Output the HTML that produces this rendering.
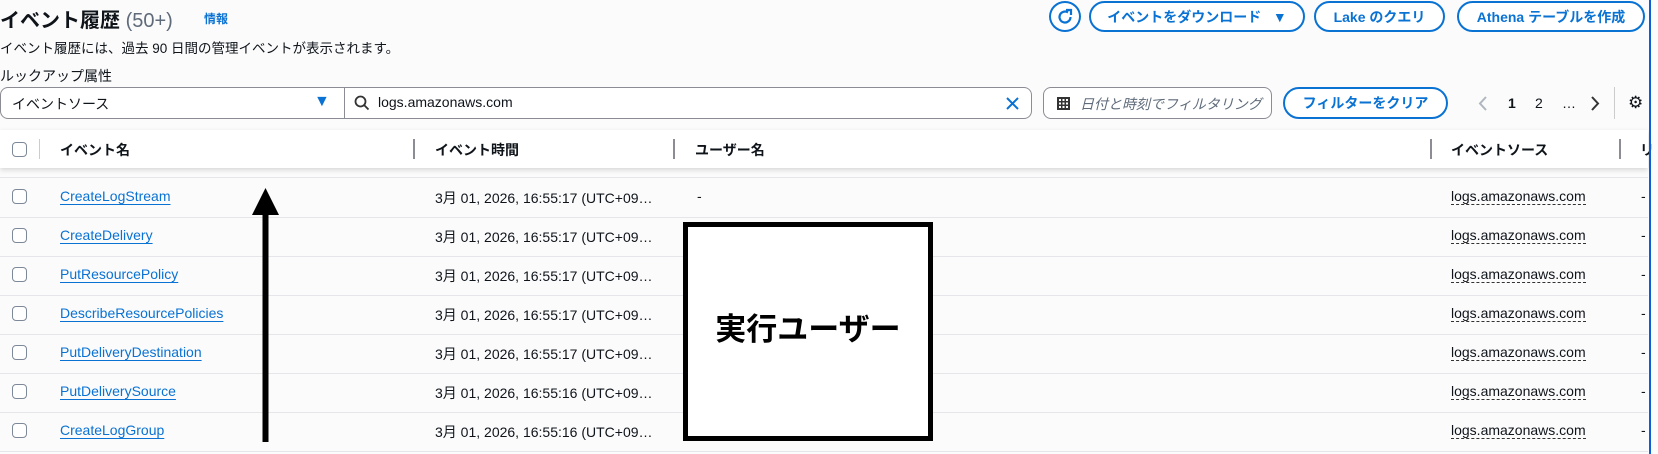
<!DOCTYPE html>
<html><head><meta charset="utf-8"><style>
*{box-sizing:border-box;margin:0;padding:0}
body{width:1658px;height:454px;overflow:hidden;background:#fbfbfb;font-family:"Liberation Sans","Noto Sans CJK JP",sans-serif;color:#0f141a;position:relative;font-size:14px}
.a{position:absolute;white-space:nowrap}
.btn{position:absolute;border:2px solid #0972d3;border-radius:20px;color:#0972d3;font-weight:bold;font-size:14px;display:flex;align-items:center;justify-content:center;background:#fff}
.cb{position:absolute;width:15px;height:15px;border:1.5px solid #7d8998;border-radius:4px;background:#fff}
.dv{position:absolute;width:2px;height:20px;background:#8c8c94}
.lk{color:#0972d3;text-decoration:underline;text-underline-offset:3px}
.src{border-bottom:1.5px dashed #333}
.ln{position:absolute;left:0;width:1648px;height:1px;background:#e6e6ea}
</style></head><body>
<div class="a" style="left:0;top:4px;font-size:20px;font-weight:bold">イベント履歴 <span style="font-weight:normal;color:#5f6b7a">(50+)</span></div>
<div class="a" style="left:204px;top:10px;font-size:12px;font-weight:bold;color:#0972d3">情報</div>
<div class="a" style="left:0;top:37px;font-size:13.5px">イベント履歴には、過去 90 日間の管理イベントが表示されます。</div>
<div class="a" style="left:0;top:66px;font-size:14px">ルックアップ属性</div>

<div class="btn" style="left:1049px;top:1px;width:32px;height:31px;border-radius:50%"><svg width="18" height="18" viewBox="0 0 18 18"><path d="M14.5 9A5.5 5.5 0 1 1 12 4.4" fill="none" stroke="#0972d3" stroke-width="2.2"/><path d="M10 2h5v5" fill="none" stroke="#0972d3" stroke-width="2.2"/></svg></div>
<div class="btn" style="left:1089px;top:1px;width:216px;height:31px">イベントをダウンロード&nbsp;&nbsp;&nbsp;▼</div>
<div class="btn" style="left:1314px;top:1px;width:131px;height:31px">Lake のクエリ</div>
<div class="btn" style="left:1457px;top:1px;width:188px;height:31px">Athena テーブルを作成</div>

<div class="a" style="left:0;top:87px;width:345px;height:32px;border:1px solid #8c8c94;border-radius:8px 0 0 8px;background:#fff"></div>
<div class="a" style="left:12px;top:94px;font-size:14px">イベントソース</div>
<div class="a" style="left:314px;top:93px;color:#0972d3;font-size:16px">▼</div>
<div class="a" style="left:344px;top:87px;width:688px;height:32px;border:1px solid #8c8c94;border-radius:0 8px 8px 0;background:#fff"></div>
<svg class="a" style="left:354px;top:95px" width="16" height="16" viewBox="0 0 16 16"><circle cx="6.5" cy="6.5" r="5" fill="none" stroke="#333" stroke-width="1.8"/><path d="M10.3 10.3L14.5 14.5" stroke="#333" stroke-width="1.8"/></svg>
<div class="a" style="left:378px;top:94px">logs.amazonaws.com</div>
<svg class="a" style="left:1005px;top:96px" width="15" height="15"><path d="M2 2L13 13M13 2L2 13" stroke="#0972d3" stroke-width="2"/></svg>

<div class="a" style="left:1043px;top:87px;width:229px;height:32px;border:1px solid #8c8c94;border-radius:8px;background:#fff"></div>
<svg class="a" style="left:1057px;top:97px" width="13" height="13"><rect width="13" height="13" fill="#333"/><g fill="#fff"><rect x="2" y="2" width="2" height="2"/><rect x="5.5" y="2" width="2" height="2"/><rect x="9" y="2" width="2" height="2"/><rect x="2" y="5.5" width="2" height="2"/><rect x="5.5" y="5.5" width="2" height="2"/><rect x="9" y="5.5" width="2" height="2"/><rect x="2" y="9" width="2" height="2"/><rect x="5.5" y="9" width="2" height="2"/><rect x="9" y="9" width="2" height="2"/></g></svg>
<div class="a" style="left:1080px;top:94px;font-style:italic;color:#5f6b7a">日付と時刻でフィルタリング</div>
<div class="btn" style="left:1283px;top:87px;width:165px;height:32px">フィルターをクリア</div>
<svg class="a" style="left:1478px;top:96px" width="10" height="15"><path d="M8 1L2 7.5L8 14" fill="none" stroke="#b0b6bf" stroke-width="2"/></svg>
<div class="a" style="left:1508px;top:95px;font-weight:bold">1</div>
<div class="a" style="left:1535px;top:95px">2</div>
<div class="a" style="left:1562px;top:95px">…</div>
<svg class="a" style="left:1590px;top:96px" width="10" height="15"><path d="M2 1L8 7.5L2 14" fill="none" stroke="#333" stroke-width="2"/></svg>
<div class="a" style="left:1614px;top:87px;width:1px;height:32px;background:#ccc"></div>
<div class="a" style="left:1628px;top:93px;font-size:17px">⚙</div>

<div class="a" style="left:0;top:130px;width:1648px;height:38px;background:#fff;box-shadow:0 2px 5px rgba(0,0,0,.15)"></div>
<div class="ln" style="top:177px"></div>
<div class="cb" style="left:12px;top:142px"></div>
<div class="dv" style="left:39px;top:139px;width:1px;background:#ccc"></div>
<div class="a" style="left:60px;top:140px;font-weight:bold">イベント名</div>
<div class="dv" style="left:413px;top:139px"></div>
<div class="a" style="left:435px;top:140px;font-weight:bold">イベント時間</div>
<div class="dv" style="left:673px;top:139px"></div>
<div class="a" style="left:695px;top:140px;font-weight:bold">ユーザー名</div>
<div class="dv" style="left:1430px;top:139px"></div>
<div class="a" style="left:1451px;top:140px;font-weight:bold">イベントソース</div>
<div class="dv" style="left:1619px;top:139px"></div>
<div class="a" style="left:1640px;top:140px;font-weight:bold">リ</div>

<div class="ln" style="top:217px"></div><div class="ln" style="top:256px"></div><div class="ln" style="top:295px"></div><div class="ln" style="top:334px"></div><div class="ln" style="top:373px"></div><div class="ln" style="top:412px"></div><div class="ln" style="top:451px"></div>

<div class="cb" style="left:12px;top:189px"></div><div class="a lk" style="left:60px;top:188px">CreateLogStream</div><div class="a" style="left:435px;top:188px">3月 01, 2026, 16:55:17 (UTC+09…</div><div class="a" style="left:697px;top:188px">-</div><div class="a" style="left:1451px;top:188px"><span class="src">logs.amazonaws.com</span></div><div class="a" style="left:1641px;top:188px">-</div>
<div class="cb" style="left:12px;top:228px"></div><div class="a lk" style="left:60px;top:227px">CreateDelivery</div><div class="a" style="left:435px;top:227px">3月 01, 2026, 16:55:17 (UTC+09…</div><div class="a" style="left:1451px;top:227px"><span class="src">logs.amazonaws.com</span></div><div class="a" style="left:1641px;top:227px">-</div>
<div class="cb" style="left:12px;top:267px"></div><div class="a lk" style="left:60px;top:266px">PutResourcePolicy</div><div class="a" style="left:435px;top:266px">3月 01, 2026, 16:55:17 (UTC+09…</div><div class="a" style="left:1451px;top:266px"><span class="src">logs.amazonaws.com</span></div><div class="a" style="left:1641px;top:266px">-</div>
<div class="cb" style="left:12px;top:306px"></div><div class="a lk" style="left:60px;top:305px">DescribeResourcePolicies</div><div class="a" style="left:435px;top:305px">3月 01, 2026, 16:55:17 (UTC+09…</div><div class="a" style="left:1451px;top:305px"><span class="src">logs.amazonaws.com</span></div><div class="a" style="left:1641px;top:305px">-</div>
<div class="cb" style="left:12px;top:345px"></div><div class="a lk" style="left:60px;top:344px">PutDeliveryDestination</div><div class="a" style="left:435px;top:344px">3月 01, 2026, 16:55:17 (UTC+09…</div><div class="a" style="left:1451px;top:344px"><span class="src">logs.amazonaws.com</span></div><div class="a" style="left:1641px;top:344px">-</div>
<div class="cb" style="left:12px;top:384px"></div><div class="a lk" style="left:60px;top:383px">PutDeliverySource</div><div class="a" style="left:435px;top:383px">3月 01, 2026, 16:55:16 (UTC+09…</div><div class="a" style="left:1451px;top:383px"><span class="src">logs.amazonaws.com</span></div><div class="a" style="left:1641px;top:383px">-</div>
<div class="cb" style="left:12px;top:423px"></div><div class="a lk" style="left:60px;top:422px">CreateLogGroup</div><div class="a" style="left:435px;top:422px">3月 01, 2026, 16:55:16 (UTC+09…</div><div class="a" style="left:1451px;top:422px"><span class="src">logs.amazonaws.com</span></div><div class="a" style="left:1641px;top:422px">-</div>

<div class="a" style="left:683px;top:222px;width:250px;height:219px;border:5px solid #000;background:#fff"></div>
<div class="a" style="left:683px;top:304px;width:250px;text-align:center;font-size:31px;font-weight:bold;color:#000">実行ユーザー</div>

<svg class="a" style="left:250px;top:186px" width="32" height="258"><path d="M15.5 2L29 29H2Z" fill="#000"/><rect x="12.5" y="26" width="6" height="230" fill="#000"/></svg>

<div class="a" style="left:1649px;top:0;width:2px;height:454px;background:#0b5ed7"></div>
</body></html>
